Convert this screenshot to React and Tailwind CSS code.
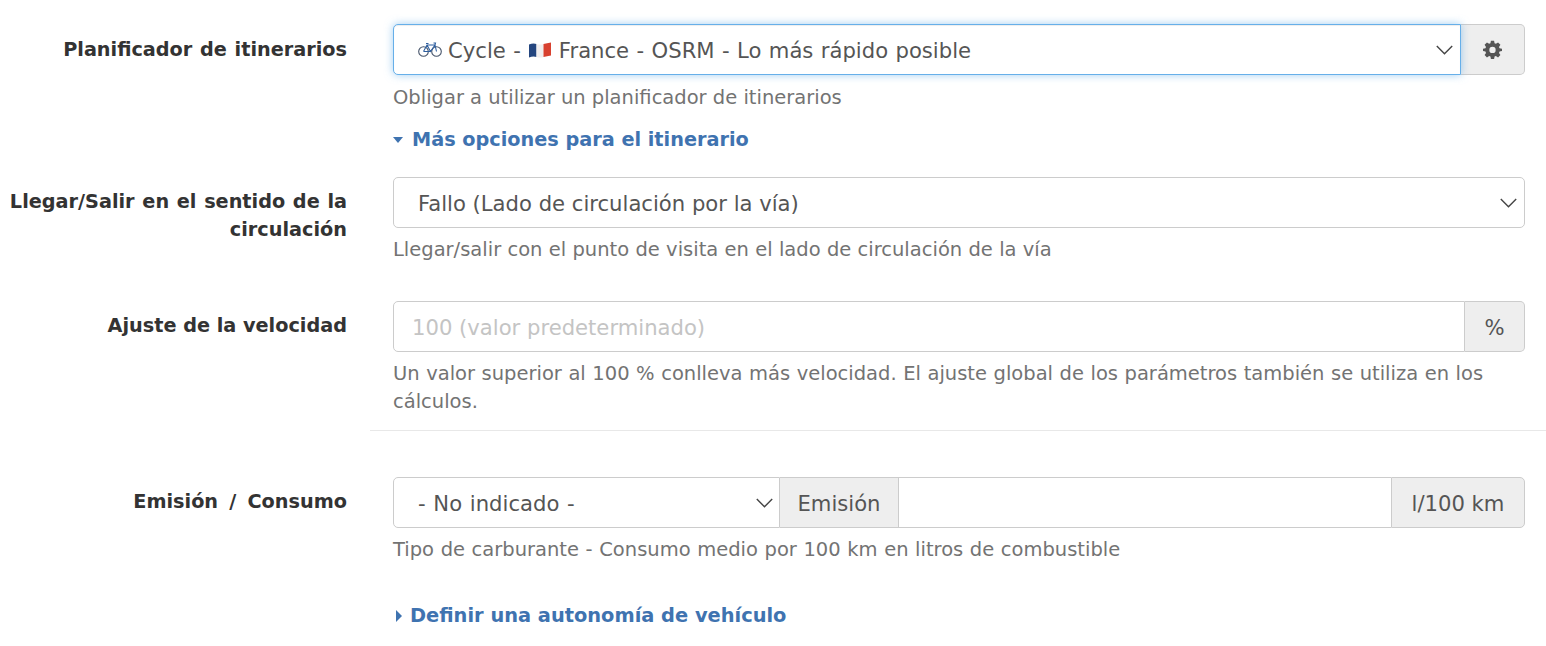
import React from "react";

const Chevron = () => (
  <svg width="17" height="10" viewBox="0 0 17 10" fill="none" stroke="#444" strokeWidth="1.400" className="shrink-0">
    <path d="M.8 1l7.700 7.800L16.200 1" />
  </svg>
);
const Gear = () => (
  <svg width="19" height="19" viewBox="0 0 24 24" fill="#555">
    <path fillRule="evenodd" d="M10 1h4l.6 3.100 1.700.7L19 3l3 3-1.800 2.700.7 1.700L24 11v3l-3.100.6-.7 1.700L22 19l-3 3-2.700-1.800-1.700.7L14 24h-4l-.6-3.100-1.700-.7L5 22l-3-3 1.800-2.700-.7-1.700L0 14v-3l3.100-.6.7-1.700L2 6l3-3 2.700 1.800 1.700-.7zM12 8.500a4 4 0 100 8 4 4 0 000-8z" />
  </svg>
);
const Bike = () => (
  <svg width="24" height="18" viewBox="0 0 24 18" fill="none" strokeWidth="1.100" className="shrink-0">
    <circle cx="5.500" cy="11.500" r="4.800" stroke="#46546a" />
    <circle cx="18.500" cy="11.500" r="4.800" stroke="#46546a" />
    <path d="M5.500 11.500L9 5h8l1.500 6.500M9 5l3.500 6.500L17 5M5.500 11.500h7M8 3.500h2.500M15.500 3h2l-.5 2" stroke="#2f5f9f" />
  </svg>
);
const Flag = () => (
  <svg width="22" height="16" viewBox="0 0 22 16" className="shrink-0 ml-2 mr-2">
    <path d="M0 2.500Q4 1 7.500 2V15Q4 14 0 15.500z" fill="#24467f" />
    <path d="M7.500 2Q11 3 14.500 2V15Q11 16 7.500 15z" fill="#f1eeee" />
    <path d="M14.500 2Q18 1 22 .5V13.500Q18 14 14.500 15z" fill="#d8412f" />
  </svg>
);

const Row = ({ label, children, className = "" }) => (
  <div className={`flex ${className}`}>
    <div className="w-[347px] shrink-0 text-right font-bold text-[#333] text-[19.250px] leading-[28px]">{label}</div>
    <div className="ml-[46px] w-[1132px] shrink-0">{children}</div>
  </div>
);
const Help = ({ children, className = "" }) => (
  <p className={`text-[#737373] text-[19.500px] leading-[28px] ${className}`}>{children}</p>
);

export default function App() {
  return (
    <div className="w-[1546px] h-[646px] bg-white overflow-hidden text-[21.150px] font-['DejaVu_Sans','Liberation_Sans',sans-serif]">
      <div className="pt-6">
        <Row label={<span className="block pt-[12px] [word-spacing:1px]">Planificador de itinerarios</span>}>
          <div className="flex h-[51px]">
            <div className="flex-1 flex items-center justify-between rounded-l-[5px] border border-[#66afe9] bg-white pl-6 pr-[7px] pt-[2px] text-[#555] shadow-[inset_0_1px_1px_rgba(0,0,0,0.075),0_0_8px_rgba(102,175,233,0.6)] relative z-10">
              <span className="flex items-center [word-spacing:0.7px]">
                <span className="mr-[6px] -mt-[2px]"><Bike /></span>
                <span>Cycle -</span>
                <Flag />
                <span>France - OSRM - Lo más rápido posible</span>
              </span>
              <span className="-mt-[2px]"><Chevron /></span>
            </div>
            <div className="w-[64px] flex items-center justify-center bg-[#eee] border border-l-0 border-[#ccc] rounded-r-[5px]"><Gear /></div>
          </div>
          <Help className="mt-[9px]">Obligar a utilizar un planificador de itinerarios</Help>
          <div className="mt-[14px] flex items-center gap-[9px] font-bold text-[#3f73b0] text-[19.250px] leading-[28px]">
            <span className="w-0 h-0 border-x-[5.500px] border-x-transparent border-t-[6px] border-t-[#3f73b0]" />
            Más opciones para el itinerario
          </div>
        </Row>

        <Row className="mt-[23px]" label={<span className="block pt-[11px] [word-spacing:1px]">Llegar/Salir en el sentido de la circulación</span>}>
          <div className="flex h-[51px] items-center justify-between rounded-[5px] border border-[#ccc] pl-6 pr-[7px] pt-[2px] text-[#555]">
            Fallo (Lado de circulación por la vía)
            <span className="-mt-[2px]"><Chevron /></span>
          </div>
          <Help className="mt-2 [word-spacing:0.1px]">Llegar/salir con el punto de visita en el lado de circulación de la vía</Help>
        </Row>

        <Row className="mt-[37px]" label={<span className="block pt-[11px]">Ajuste de la velocidad</span>}>
          <div className="flex h-[51px]">
            <div className="flex-1 flex items-center rounded-l-[5px] border border-[#ccc] pl-[18px] pt-[2px] text-[#c4c4c4]">100 (valor predeterminado)</div>
            <div className="w-[60px] flex items-center justify-center bg-[#eee] border border-l-0 border-[#ccc] rounded-r-[5px] pt-[2px] text-[#555]">%</div>
          </div>
          <Help className="mt-2 [word-spacing:0.35px]">Un valor superior al 100 % conlleva más velocidad. El ajuste global de los parámetros también se utiliza en los cálculos.</Help>
        </Row>

        <div className="ml-[370px] mt-[14px] border-t border-[#e8e8e8]" />

        <Row className="mt-[46px]" label={<span className="block pt-[11px] [word-spacing:4.500px]">Emisión / Consumo</span>}>
          <div className="flex h-[51px] text-[#555]">
            <div className="w-[387px] flex items-center justify-between rounded-l-[5px] border border-[#ccc] pl-6 pr-[6px] pt-[2px]">
              <span className="[word-spacing:1px]">- No indicado -</span>
              <span className="-mt-[2px]"><Chevron /></span>
            </div>
            <div className="w-[119px] flex items-center justify-center bg-[#eee] border border-l-0 border-[#ccc] pt-[2px]">Emisión</div>
            <div className="flex-1 border-y border-[#ccc]" />
            <div className="w-[134px] flex items-center justify-center bg-[#eee] border border-[#ccc] rounded-r-[5px] pt-[2px]">l/100 km</div>
          </div>
          <Help className="mt-2 [word-spacing:0.4px]">Tipo de carburante - Consumo medio por 100 km en litros de combustible</Help>
          <div className="mt-[38px] flex items-center gap-[8px] font-bold text-[#3f73b0] text-[19.400px] leading-[28px]">
            <span className="w-0 h-0 ml-[3px] border-y-[6px] border-y-transparent border-l-[6px] border-l-[#3f73b0]" />
            Definir una autonomía de vehículo
          </div>
        </Row>
      </div>
    </div>
  );
}
